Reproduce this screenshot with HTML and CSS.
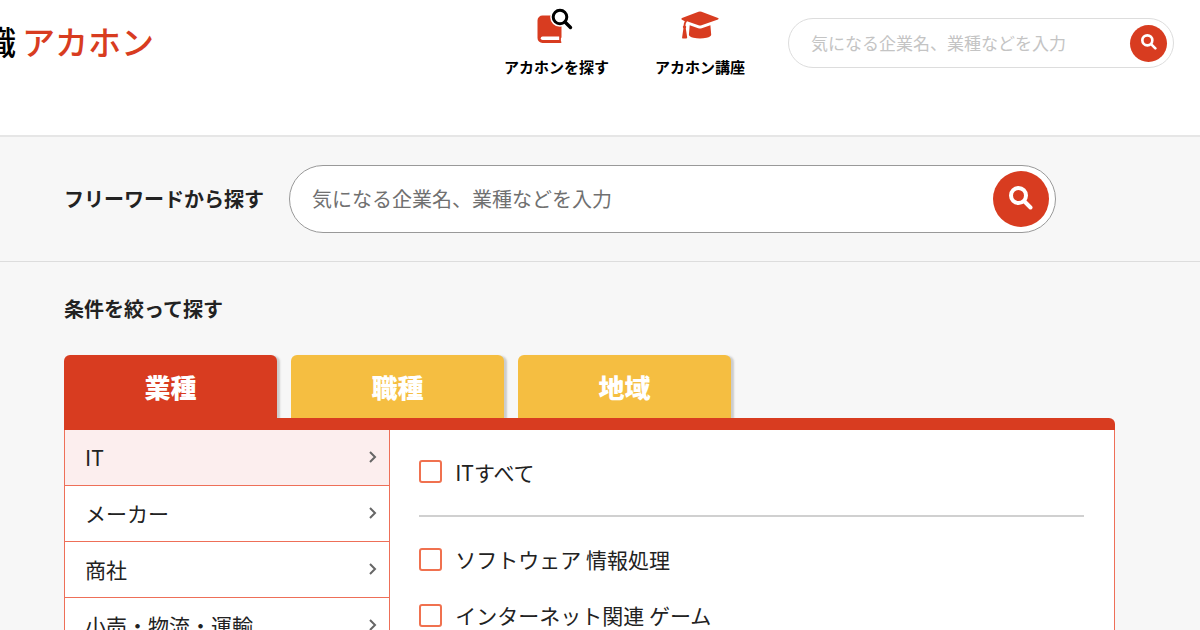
FILE: index.html
```html
<!DOCTYPE html>
<html lang="ja">
<head>
    <meta charset="UTF-8">
    <meta name="viewport" content="width=device-width, initial-scale=1.0">
    <title>アカホン</title>
    <link rel="stylesheet" href="styles.css">
</head>
<body>

<header class="header">
    <a href="#" class="logo"><span class="logo-sub">職</span><span class="logo-main">アカホン</span></a>
    <nav class="nav">
        <a href="#" class="nav-item">
            <svg class="nav-icon" viewBox="0 0 40 36" aria-hidden="true">
                <path fill="#d83c20" d="M6.500 6.500h19v21.500q0 .8-.6 1.200v3q.6.3.6.9 0 .9-.9.9H6.500a5 5 0 0 1-5-5v-17.500a5 5 0 0 1 5-5z"/>
                <path fill="#fff" d="M6.500 27.500h16.700v3.500H6.500a1.700 1.700 0 0 1 0-3.500z"/>
                <circle cx="24" cy="8" r="9.800" fill="#fff"/>
                <circle cx="24" cy="8" r="6.800" fill="none" stroke="#000" stroke-width="3"/>
                <path d="M29 13l5.500 5.500" stroke="#000" stroke-width="3.400" stroke-linecap="round"/>
            </svg>
            アカホンを探す
        </a>
        <a href="#" class="nav-item">
            <svg class="nav-icon" viewBox="0 0 40 36" aria-hidden="true">
                <path fill="#d83c20" d="M20 2.500q.8 0 1.500.3L38 9q1.600.7 0 1.500l-16.500 5.700q-1.500.6-3 0L7 12.300Q5.500 14 5.400 16.500q1.500 1 .4 3l1.400 9q0 .8-.8.9H2.800q-.9-.1-.7-1l1.300-8.900q-1.300-1.800.2-3 .1-2.500 1.200-4.300L2 10.700q-1.600-.9 0-1.800L18.500 2.800q.7-.3 1.500-.3z"/>
                <path fill="#d83c20" d="M9.700 16.200l8.500 3q1.800.6 3.600 0l8.600-3 .8 9.500q-.3 2-4.600 3-6.600 1.600-13.200 0-4.200-1-4.500-3z"/>
            </svg>
            アカホン講座
        </a>
    </nav>
    <form class="search search-small">
        <input type="text" aria-label="キーワード検索" placeholder="気になる企業名、業種などを入力">
        <button type="submit" aria-label="検索">
            <svg viewBox="0 0 24 24" aria-hidden="true">
                <circle cx="9.500" cy="9.500" r="7.500"/>
                <path d="M15.500 15.500l6 6"/>
            </svg>
        </button>
    </form>
</header>

<main>
    <section class="freeword">
        <label for="freeword" class="heading">フリーワードから探す</label>
        <form class="search search-large">
            <input type="text" id="freeword" placeholder="気になる企業名、業種などを入力">
            <button type="submit" aria-label="検索">
                <svg viewBox="0 0 24 24" aria-hidden="true">
                    <circle cx="9.500" cy="9.500" r="7.500"/>
                    <path d="M15.500 15.500l6 6"/>
                </svg>
            </button>
        </form>
    </section>

    <section class="filter">
        <h2 class="heading">条件を絞って探す</h2>
        <div class="tabs">
            <button type="button" class="tab active">業種</button>
            <button type="button" class="tab">職種</button>
            <button type="button" class="tab">地域</button>
        </div>
        <div class="panel-bar"></div>
        <div class="panel">
            <div class="categories">
                <button type="button" class="category selected">IT <svg viewBox="0 0 8 14" aria-hidden="true"><path d="M1 2l5 5-5 5"/></svg></button>
                <button type="button" class="category">メーカー <svg viewBox="0 0 8 14" aria-hidden="true"><path d="M1 2l5 5-5 5"/></svg></button>
                <button type="button" class="category">商社 <svg viewBox="0 0 8 14" aria-hidden="true"><path d="M1 2l5 5-5 5"/></svg></button>
                <button type="button" class="category">小売・物流・運輸 <svg viewBox="0 0 8 14" aria-hidden="true"><path d="M1 2l5 5-5 5"/></svg></button>
            </div>
            <div class="options">
                <label class="option option-all"><input type="checkbox">ITすべて</label>
                <label class="option"><input type="checkbox">ソフトウェア 情報処理</label>
                <label class="option"><input type="checkbox">インターネット関連 ゲーム</label>
            </div>
        </div>
    </section>
</main>

</body>
</html>
```

FILE: styles.css
```css
* {
    box-sizing: border-box;
}
body {
    margin: 0;
    background-color: #f7f7f7;
    color: #222;
    font-family: "Noto Sans CJK JP", sans-serif;
}
a {
    color: inherit;
    text-decoration: none;
}
button, input {
    margin: 0;
    font-family: inherit;
    color: inherit;
}
button {
    cursor: pointer;
}

/* header */
.header {
    display: flex;
    align-items: flex-start;
    min-height: 137px;
    padding-right: 26px;
    background-color: #fff;
    border-bottom: 2px solid #e6e6e6;
}
.logo {
    display: flex;
    gap: 6px;
    margin-left: -17px;
    padding-top: 17px;
    font-size: 33px;
    font-weight: 500;
    line-height: 48px;
}
.logo-sub {
    color: #000;
}
.logo-main {
    color: #d83c20;
}
.nav {
    display: flex;
    gap: 46px;
    margin-left: auto;
    margin-right: 43px;
    padding-top: 9px;
    color: #000;
    font-size: 15px;
    font-weight: 700;
    line-height: 24px;
}
.nav-item {
    display: flex;
    flex-direction: column;
    align-items: center;
    gap: 10px;
}
.nav-icon {
    width: 40px;
    height: 36px;
    overflow: visible;
}

/* search boxes */
.search {
    display: flex;
    align-items: center;
    background-color: #fff;
}
.search input {
    flex: 1;
    min-width: 0;
    padding: 0 0 2px;
    border: none;
    outline: none;
    background: none;
}
.search button {
    display: flex;
    align-items: center;
    justify-content: center;
    padding: 0 0 2px;
    border: none;
    border-radius: 50%;
    background-color: #d83c20;
}
.search svg {
    fill: none;
    stroke: #fff;
    stroke-width: 4;
    stroke-linecap: round;
}
.search-small {
    flex: 0 1 386px;
    height: 50px;
    margin-top: 18px;
    padding: 0 6px 0 22px;
    border: 1px solid #ddd;
    border-radius: 25px;
}
.search-small input {
    font-size: 17px;
}
.search-small input::placeholder {
    color: #c4c4c4;
}
.search-small button {
    width: 37px;
    height: 37px;
}
.search-small svg {
    width: 16px;
    height: 16px;
}
.search-large {
    flex: 1;
    height: 68px;
    padding: 0 6px 0 22px;
    border: 1px solid #999;
    border-radius: 34px;
}
.search-large input {
    font-size: 20px;
}
.search-large input::placeholder {
    color: #707070;
}
.search-large button {
    width: 56px;
    height: 56px;
}
.search-large svg {
    width: 24px;
    height: 24px;
}

/* free word */
.freeword {
    display: flex;
    align-items: center;
    gap: 25px;
    padding: 28px 144px 28px 64px;
    border-bottom: 1px solid #ddd;
}
.heading {
    margin: 0;
    font-size: 20px;
    font-weight: 700;
    line-height: 30px;
}

/* filter */
.filter {
    padding: 32px 85px 0 64px;
}
.tabs {
    display: flex;
    gap: 14px;
    margin-top: 31px;
}
.tab {
    flex: 0 1 213px;
    height: 63px;
    padding: 0;
    border: none;
    border-radius: 6px 6px 0 0;
    background-color: #f5be41;
    box-shadow: 3px 1px 2px #ccc;
    color: #fff;
    font-size: 26px;
    font-weight: 900;
}
.tab.active {
    background-color: #d83c20;
}
.panel-bar {
    position: relative;
    height: 12px;
    border-radius: 0 6px 0 0;
    background-color: #d83c20;
}
.panel {
    display: flex;
    border: 1px solid #ee6f58;
    border-top: none;
    background-color: #fff;
}
.categories {
    flex: 0 0 31%;
    border-right: 1px solid #ee6f58;
}
.category {
    display: flex;
    align-items: center;
    justify-content: space-between;
    width: 100%;
    height: 56px;
    padding: 0 12px 2px 20px;
    border: none;
    border-bottom: 1px solid #ee6f58;
    background-color: #fff;
    font-size: 21px;
}
.category.selected {
    background-color: #fceeee;
}
.category svg {
    width: 8px;
    height: 14px;
    fill: none;
    stroke: #666;
    stroke-width: 2;
    overflow: visible;
}
.options {
    flex: 1;
    padding: 0 30px 0 29px;
}
.option {
    display: flex;
    align-items: center;
    gap: 13px;
    height: 56px;
    padding-bottom: 2px;
    font-size: 21px;
}
.option-all {
    height: 87px;
    margin-bottom: 15px;
    border-bottom: 2px solid #d0d0d0;
}
.option input {
    appearance: none;
    width: 23px;
    height: 23px;
    border: 2px solid #f0714f;
    border-radius: 3px;
    background-color: #fff;
}
.option input:checked {
    background-color: #f0714f;
}
```
